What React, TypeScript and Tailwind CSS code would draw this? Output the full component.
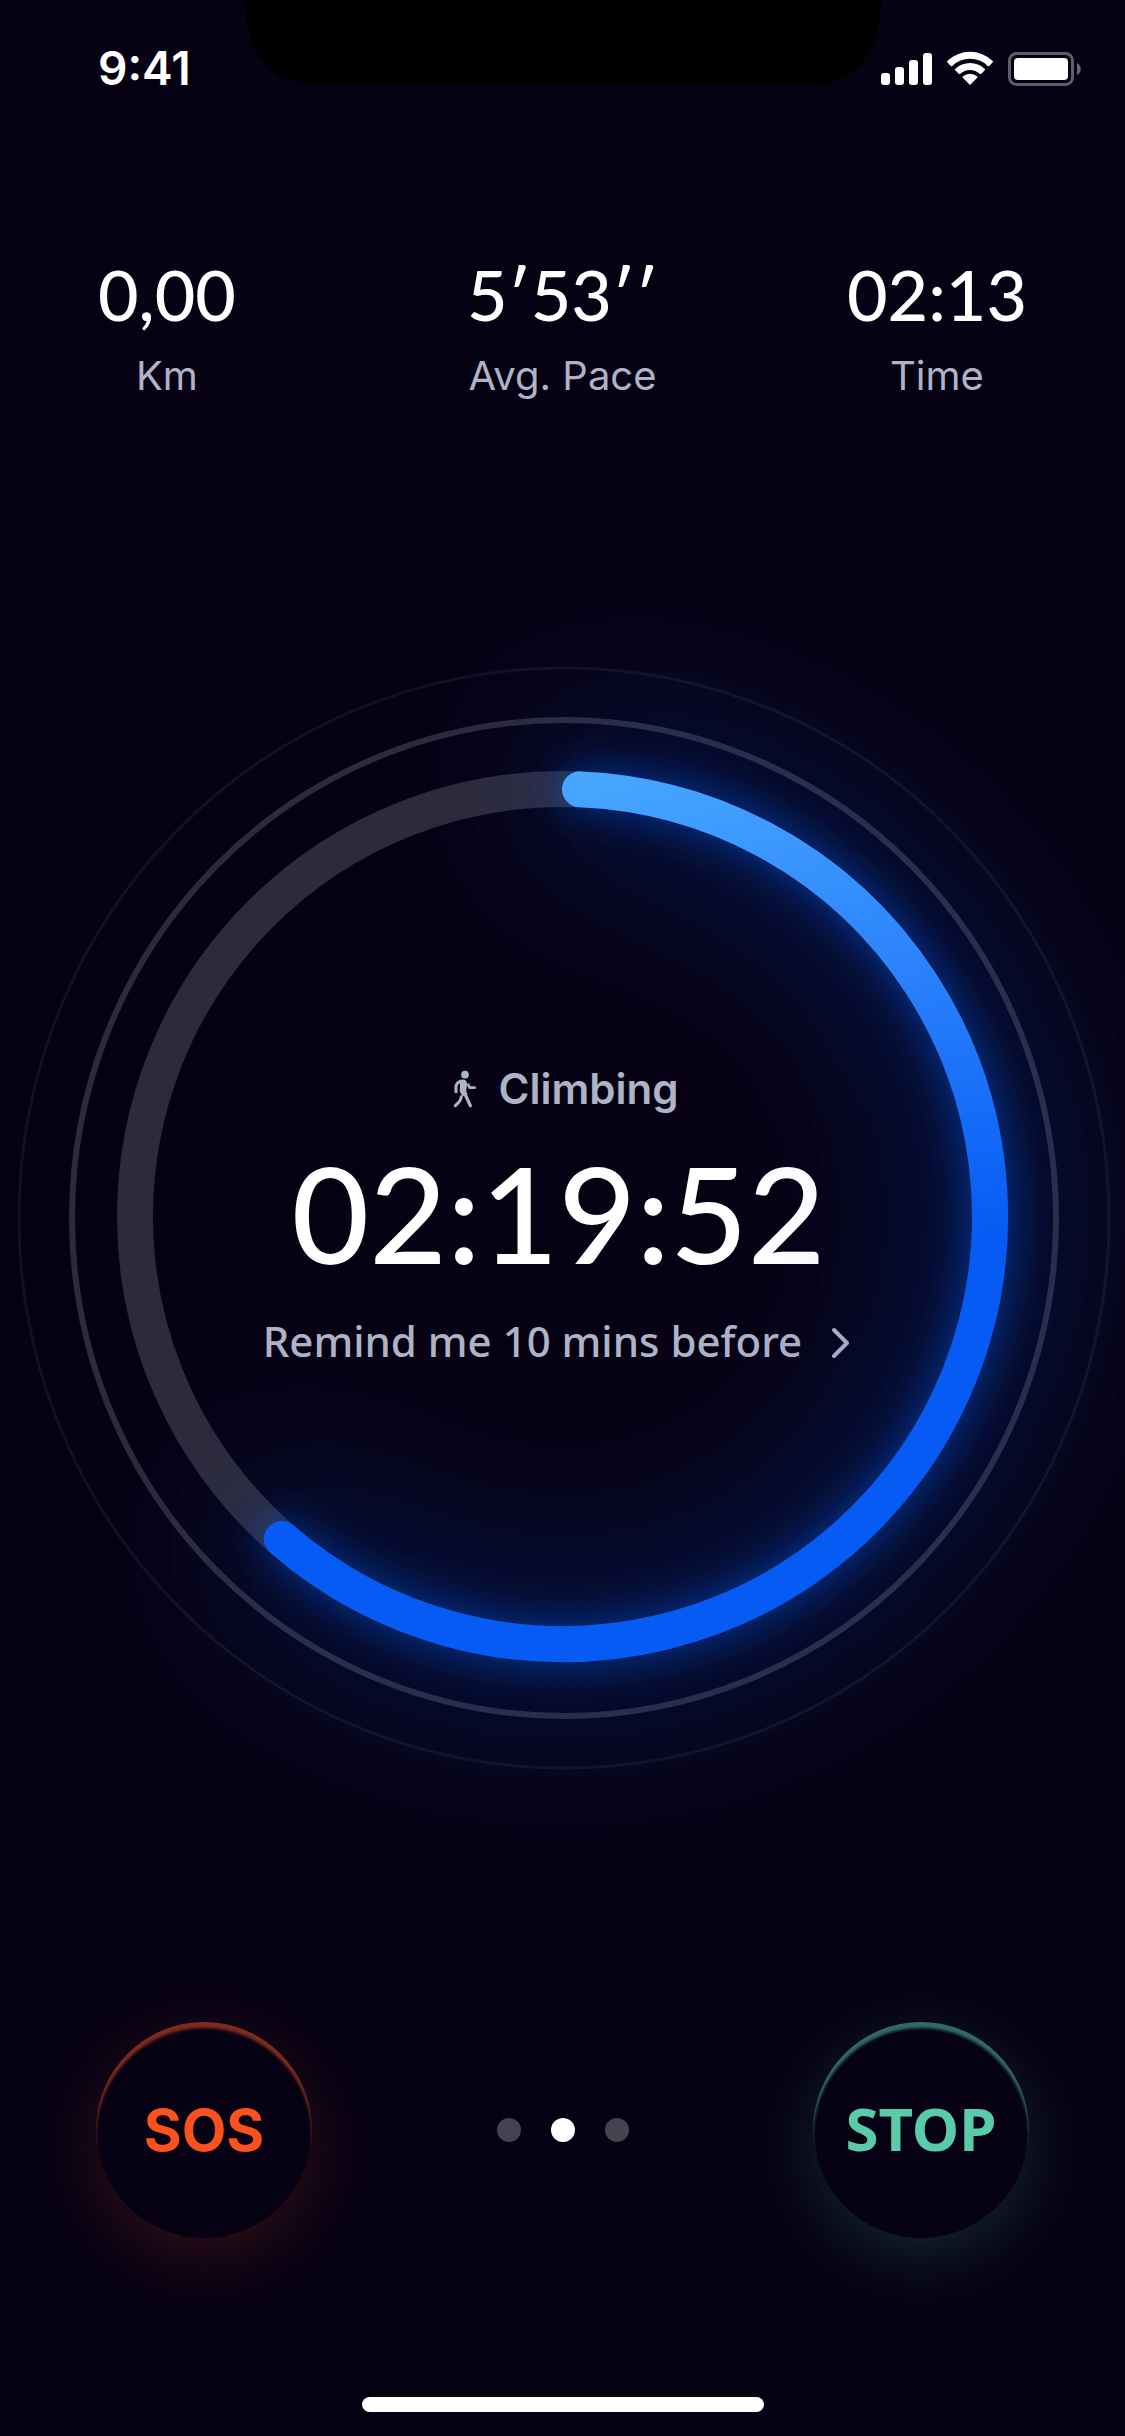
import React from "react";

const stats = [
  { value: "0,00", label: "Km", place: "justify-self-start" },
  { value: "5′53′′", label: "Avg. Pace", place: "justify-self-center" },
  { value: "02:13", label: "Time", place: "justify-self-end" },
];

const pages = ["Map", "Timer", "Music"];

const arcPath = "M580 149.36 A427.5 427.5 0 1 1 281.9 899";

function StatusBar() {
  return (
    <header className="relative flex h-[132px] items-start justify-between pt-[40px] pr-[43px] pl-[98px]">
      <span className="font-['Inter',sans-serif] text-[46px] leading-[56px] font-semibold">9:41</span>
      <svg
        className="absolute top-0 left-1/2 -translate-x-1/2"
        width="637"
        height="84"
        viewBox="0 0 637 84"
        aria-hidden="true"
      >
        <path d="M0 0 C2 52 24 84 69 84 H568 C613 84 635 52 637 0 Z" fill="#000" />
      </svg>
      <svg
        className="mt-[10px]"
        width="202"
        height="37"
        viewBox="0 0 202 37"
        role="img"
        aria-label="Signal, Wi-Fi and battery"
      >
        <g fill="#fff">
          <rect x="1" y="23" width="9" height="12" rx="3" />
          <rect x="15" y="17" width="9" height="18" rx="3" />
          <rect x="29" y="10" width="9" height="25" rx="3" />
          <rect x="43" y="3" width="9" height="32" rx="3" />
          <path d="M90 35 L82.8 27.8 C82.4 27.3 82.5 26.6 83 26.2 A11 11 0 0 1 97 26.2 C97.5 26.6 97.6 27.3 97.2 27.8 Z" />
          <path d="M75.2 20.3 C74.8 19.8 74.9 19.3 75.3 18.9 A21.5 21.5 0 0 1 104.7 18.9 C105.1 19.3 105.2 19.8 104.8 20.3 L101.3 23.8 C100.9 24.2 100.3 24.2 99.8 23.8 A14.5 14.5 0 0 0 80.2 23.8 C79.7 24.2 79.1 24.2 78.7 23.8 Z" />
          <path d="M67.3 12.3 C66.9 11.9 66.9 11.3 67.3 10.9 A33 33 0 0 1 112.7 10.9 C113.1 11.3 113.1 11.9 112.7 12.3 L109.2 15.9 C108.8 16.3 108.2 16.3 107.7 15.9 A25.5 25.5 0 0 0 72.3 15.9 C71.8 16.3 71.2 16.3 70.8 15.9 Z" />
          <rect x="134" y="8" width="54" height="22" rx="4" />
        </g>
        <rect x="129.5" y="3.5" width="63" height="31" rx="7" fill="none" stroke="#fff" strokeOpacity="0.36" strokeWidth="3" />
        <path d="M197 13 C202 15 202 23 197 25 Z" fill="#fff" fillOpacity="0.4" />
      </svg>
    </header>
  );
}

function WalkIcon() {
  return (
    <svg width="36" height="38" viewBox="51 54 108 114" fill="#aeb3c6" aria-hidden="true">
      <circle cx="105" cy="68" r="11.5" />
      <path d="M84 90 C92 79 111 80 111 95 C111 104 108 112 109 119 L113 128 L98 133 L90 120 C88 112 91 102 90 96 Z" />
      <g fill="none" stroke="#aeb3c6" strokeLinecap="round" strokeLinejoin="round">
        <path d="M91 88 Q79 92 78 104 L78 119" strokeWidth="9" />
        <path d="M115 98 L119 107 L134 107" strokeWidth="8" />
        <path d="M104 124 L121 161" strokeWidth="10" />
        <path d="M94 134 Q93 144 87 150 L76 161" strokeWidth="9" />
      </g>
    </svg>
  );
}

function Dial() {
  return (
    <svg
      className="pointer-events-none relative col-start-1 row-start-1 w-full overflow-visible"
      viewBox="0 0 1125 1156"
      aria-hidden="true"
    >
      <defs>
        <linearGradient id="arc" gradientUnits="userSpaceOnUse" x1="590" y1="120" x2="720" y2="660">
          <stop offset="0" stopColor="#48a9ff" />
          <stop offset="0.5" stopColor="#2b82fb" />
          <stop offset="1" stopColor="#065bf5" />
        </linearGradient>
        <filter id="near" filterUnits="userSpaceOnUse" x="-300" y="-300" width="1725" height="1756">
          <feGaussianBlur stdDeviation="20" />
        </filter>
        <filter id="far" filterUnits="userSpaceOnUse" x="-500" y="-500" width="2125" height="2156">
          <feGaussianBlur stdDeviation="85" />
        </filter>
      </defs>
      <g fill="none" stroke="#fff">
        <ellipse cx="564" cy="578" rx="545" ry="550" strokeWidth="3" strokeOpacity="0.06" />
        <ellipse cx="564" cy="578" rx="492" ry="498" strokeWidth="6" strokeOpacity="0.16" />
        <circle cx="562.5" cy="576.5" r="427.5" strokeWidth="36" strokeOpacity="0.16" />
      </g>
      <g fill="none" strokeLinecap="round">
        <path d={arcPath} stroke="#0a4df5" strokeWidth="70" strokeOpacity="0.45" filter="url(#far)" />
        <path d={arcPath} stroke="#0a5cf5" strokeWidth="38" strokeOpacity="0.52" filter="url(#near)" />
        <path d={arcPath} stroke="url(#arc)" strokeWidth="36" />
      </g>
    </svg>
  );
}

export default function App() {
  return (
    <main className="flex min-h-screen flex-col overflow-hidden bg-[#060214] font-['Noto_Sans',sans-serif] text-white">
      <StatusBar />

      <dl className="grid grid-cols-[1fr_auto_1fr] px-[98px] pt-[118px]">
        {stats.map((s) => (
          <div key={s.label} className={`flex flex-col-reverse items-center gap-[10px] ${s.place}`}>
            <dt className="font-['Inter',sans-serif] text-[40px] leading-[56px] text-[#aeb3c6]">{s.label}</dt>
            <dd className="font-['Lato',sans-serif] text-[70px] leading-[88px] font-medium">{s.value}</dd>
          </div>
        ))}
      </dl>

      <section className="mt-[236px] grid place-items-center" aria-label="Workout timer">
        <div className="col-start-1 row-start-1 flex flex-col items-center pb-[6px]">
          <div className="flex items-center gap-4 text-[#aeb3c6]">
            <WalkIcon />
            <h1 className="font-['Inter',sans-serif] text-[42px] leading-[56px] font-semibold">Climbing</h1>
          </div>
          <time className="mt-4 pr-2 font-['Lato',sans-serif] text-[134px] leading-[160px] font-medium">02:19:52</time>
          <button type="button" className="mt-5 flex items-center gap-6 text-[42px] leading-[56px] font-medium text-[#aeb3c6]">
            Remind me 10 mins before
            <svg className="mt-1" width="36" height="36" viewBox="0 0 36 36" fill="none" aria-hidden="true">
              <path d="M8 5 L21 18 L8 31" stroke="#aeb3c6" strokeWidth="4" strokeLinecap="round" strokeLinejoin="round" />
            </svg>
          </button>
        </div>
        <Dial />
      </section>

      <nav className="mt-[226px] grid grid-cols-[1fr_auto_1fr] items-center px-[96px]" aria-label="Workout controls">
        <button
          type="button"
          className="size-[216px] justify-self-start rounded-full bg-[#060214] font-['Inter',sans-serif] text-[58px] font-bold text-[#fb511e] shadow-[inset_0_6px_3px_#7e2c1e,0_18px_66px_rgba(251,81,30,0.18)]"
        >
          SOS
        </button>
        <div className="flex gap-[30px]">
          {pages.map((p, i) => (
            <button
              key={p}
              type="button"
              aria-label={p}
              className={`size-6 rounded-full ${i === 1 ? "bg-white" : "bg-[#464250]"}`}
            />
          ))}
        </div>
        <button
          type="button"
          className="size-[216px] justify-self-end rounded-full bg-[#060214] pb-1 text-[60px] font-bold text-[#5acba8] shadow-[inset_0_6px_3px_#326b60,0_18px_66px_rgba(90,203,168,0.18)]"
        >
          STOP
        </button>
      </nav>

      <div className="mt-auto flex justify-center pt-20 pb-6">
        <div className="h-[15px] w-[402px] rounded-full bg-white" />
      </div>
    </main>
  );
}
